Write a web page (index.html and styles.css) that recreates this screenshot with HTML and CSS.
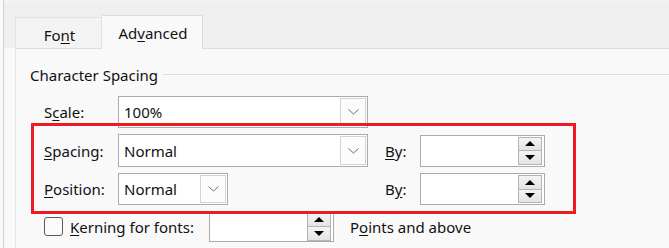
FILE: index.html
```html
<!DOCTYPE html>
<html lang="en">

<head>
    <meta charset="UTF-8">
    <meta name="viewport" content="width=device-width, initial-scale=1.0">
    <title>Font</title>
    <link rel="stylesheet" href="styles.css">
</head>

<body>
    <div class="dialog">
        <div class="tabs">
            <div class="tab">Fo<u>n</u>t</div>
            <div class="tab active">Ad<u>v</u>anced</div>
        </div>
        <div class="panel">
            <div class="group">
                <div class="group-title">Character Spacing</div>

                <div class="grid">
                    <label class="lbl">S<u>c</u>ale:</label>
                    <div class="combo">
                        <span>100%</span>
                        <span class="drop"><svg width="11" height="6" viewBox="0 0 11 6"><path d="M0.5 0.5 L5.5 5 L10.5 0.5" fill="none" stroke="#6e6e6e" stroke-width="1"/></svg></span>
                    </div>
                    <div></div>
                    <div></div>

                    <label class="lbl"><u>S</u>pacing:</label>
                    <div class="combo tall">
                        <span>Normal</span>
                        <span class="drop"><svg width="11" height="6" viewBox="0 0 11 6"><path d="M0.5 0.5 L5.5 5 L10.5 0.5" fill="none" stroke="#6e6e6e" stroke-width="1"/></svg></span>
                    </div>
                    <label class="by"><u>B</u>y:</label>
                    <div class="spin">
                        <span class="spin-btns">
                            <span class="spin-btn"><span class="arr up"></span></span>
                            <span class="spin-btn"><span class="arr down"></span></span>
                        </span>
                    </div>

                    <label class="lbl"><u>P</u>osition:</label>
                    <div class="combo short">
                        <span>Normal</span>
                        <span class="drop"><svg width="11" height="6" viewBox="0 0 11 6"><path d="M0.5 0.5 L5.5 5 L10.5 0.5" fill="none" stroke="#6e6e6e" stroke-width="1"/></svg></span>
                    </div>
                    <label class="by">B<u>y</u>:</label>
                    <div class="spin">
                        <span class="spin-btns">
                            <span class="spin-btn"><span class="arr up"></span></span>
                            <span class="spin-btn"><span class="arr down"></span></span>
                        </span>
                    </div>
                </div>

                <div class="kerning">
                    <span class="check"></span>
                    <label class="kern-lbl"><u>K</u>erning for fonts:</label>
                    <div class="spin">
                        <span class="spin-btns">
                            <span class="spin-btn"><span class="arr up"></span></span>
                            <span class="spin-btn"><span class="arr down"></span></span>
                        </span>
                    </div>
                    <label class="points">P<u>o</u>ints and above</label>
                </div>

                <!-- highlight drawn over the spacing / position rows -->
                <div class="highlight"></div>
            </div>
        </div>
    </div>
</body>

</html>
```

FILE: styles.css
```css
body {
    margin: 0;
    background-color: #f9f9f9;
    color: #111;
    font-family: "Noto Sans", "Open Sans", sans-serif;
    font-size: 15px;
    overflow: hidden;
}

u {
    text-underline-offset: 2px;
}

.dialog {
    margin-left: 3px;
    border-left: 1px solid #d2d2d2;
    height: 248px;
}

.tabs {
    display: flex;
    align-items: flex-end;
    height: 45px;
    border-top: 3px solid #f5f1f5;
    background-color: #efefef;
    padding-left: 11px;
}

.tab {
    box-sizing: border-box;
    width: 87px;
    height: 31px;
    padding-top: 7px;
    padding-left: 2px;
    text-align: center;
    background-color: #f3f3f3;
    border: 1px solid #e2e2e2;
    border-bottom: none;
}

.tab.active {
    position: relative;
    width: 101px;
    height: 34px;
    margin-bottom: -1px;
    padding-top: 7px;
    padding-left: 2px;
    background-color: #f9f9f9;
    border-color: #dcdcdc;
    border-left: none;
}

.panel {
    margin-left: 11px;
    border-top: 1px solid #dcdcdc;
    border-left: 1px solid #e4e4e4;
    height: 199px;
}

.group {
    position: relative;
    padding-top: 15px;
}

.group-title {
    display: flex;
    align-items: center;
    height: 21px;
    padding-left: 14px;
}

.group-title::after {
    content: "";
    flex: 1;
    height: 1px;
    margin-left: 5px;
    background-color: #dcdcdc;
}

.grid {
    display: grid;
    grid-template-columns: 74px 250px 52px 125px;
    grid-template-rows: 32px 33px 32px;
    row-gap: 6px;
    align-items: center;
    margin-top: 11px;
    padding-left: 28px;
}

.combo {
    box-sizing: border-box;
    height: 32px;
    display: flex;
    align-items: center;
    justify-content: space-between;
    padding-left: 5px;
    background-color: #fff;
    border: 1px solid #ababab;
}

.combo.tall {
    height: 33px;
}

.combo.short {
    width: 110px;
}

.drop {
    box-sizing: border-box;
    width: 26px;
    height: calc(100% - 2px);
    margin-right: 1px;
    display: flex;
    align-items: center;
    justify-content: center;
    border: 1px solid #d3d3d3;
    background-color: #fcfcfc;
}

.by {
    padding-left: 17px;
}

.spin {
    box-sizing: border-box;
    width: 125px;
    height: 32px;
    display: flex;
    justify-content: flex-end;
    align-items: center;
    padding-right: 2px;
    background-color: #fff;
    border: 1px solid #ababab;
}

.spin-btns {
    display: flex;
    flex-direction: column;
    width: 24px;
    height: 28px;
}

.spin-btn {
    flex: 1;
    display: flex;
    align-items: center;
    justify-content: center;
    border: 1px solid #b4b4b4;
    background: linear-gradient(#f4f4f4, #e4e4e4);
}

.spin-btn + .spin-btn {
    border-top: none;
}

.arr {
    width: 0;
    height: 0;
    border-left: 5px solid transparent;
    border-right: 5px solid transparent;
}

.arr.up {
    border-bottom: 5px solid #000;
}

.arr.down {
    border-top: 5px solid #000;
}

.kerning {
    display: flex;
    align-items: center;
    margin-top: 6px;
    padding-left: 28px;
}

.kerning .spin {
    height: 31px;
}

.check {
    box-sizing: border-box;
    width: 19px;
    height: 19px;
    border: 1px solid #5a5a5a;
    border-radius: 3px;
    background-color: #fbfbfb;
}

.kern-lbl {
    width: 139px;
    padding-left: 7px;
}

.points {
    padding-left: 16px;
}

.highlight {
    position: absolute;
    left: 15px;
    top: 74px;
    width: 545px;
    height: 91px;
    box-sizing: border-box;
    border: 3px solid #ec1c24;
}
```
